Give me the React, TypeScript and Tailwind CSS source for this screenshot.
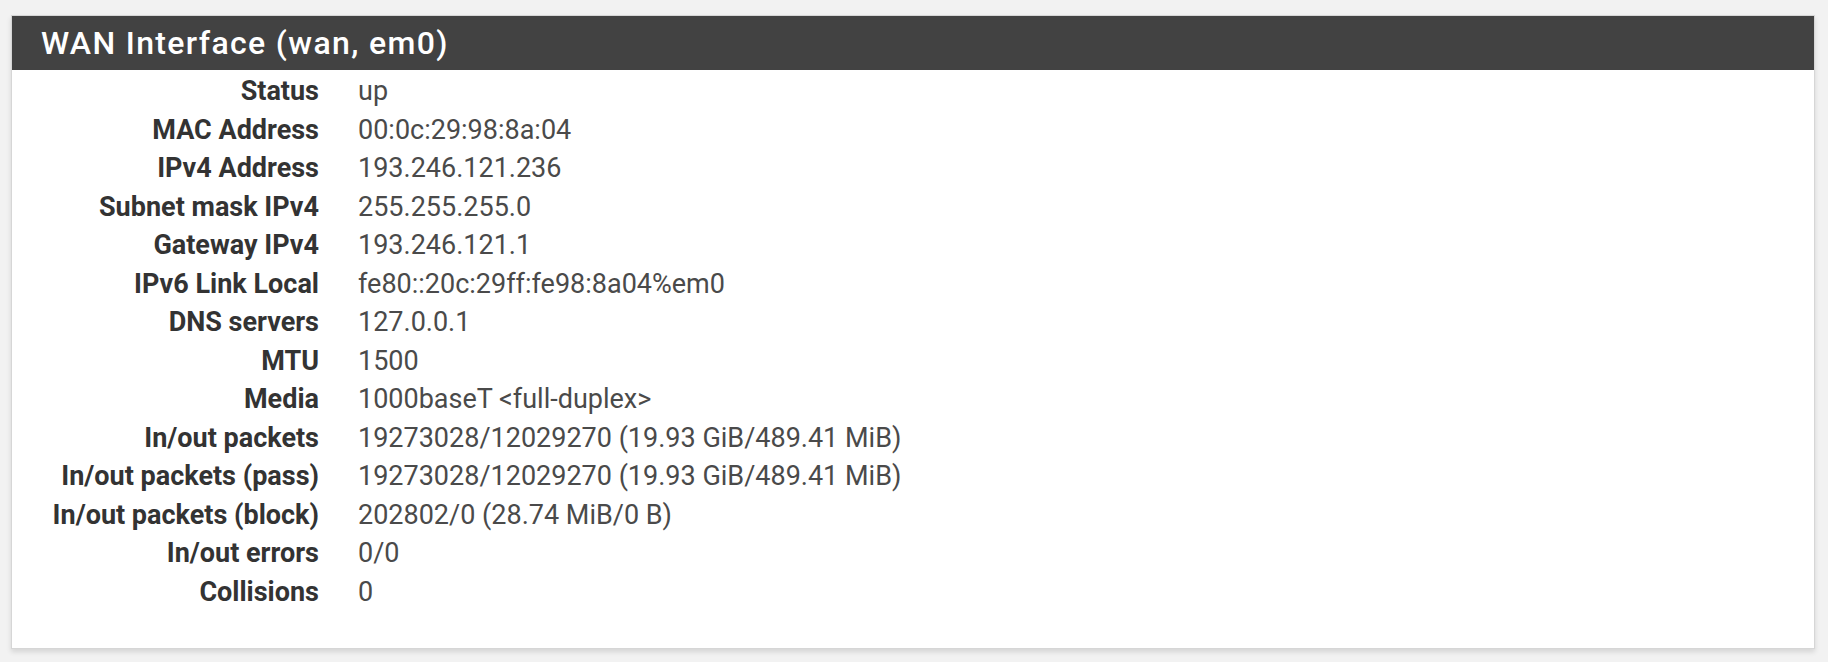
const rows: [string, string][] = [
  ['Status', 'up'],
  ['MAC Address', '00:0c:29:98:8a:04'],
  ['IPv4 Address', '193.246.121.236'],
  ['Subnet mask IPv4', '255.255.255.0'],
  ['Gateway IPv4', '193.246.121.1'],
  ['IPv6 Link Local', 'fe80::20c:29ff:fe98:8a04%em0'],
  ['DNS servers', '127.0.0.1'],
  ['MTU', '1500'],
  ['Media', '1000baseT <full-duplex>'],
  ['In/out packets', '19273028/12029270 (19.93 GiB/489.41 MiB)'],
  ['In/out packets (pass)', '19273028/12029270 (19.93 GiB/489.41 MiB)'],
  ['In/out packets (block)', '202802/0 (28.74 MiB/0 B)'],
  ['In/out errors', '0/0'],
  ['Collisions', '0'],
];

export default function App() {
  return (
    <div className="min-h-[662px] bg-[#f2f2f2] pt-[15px] pb-[15px] pl-[11px] pr-[13px] font-['Roboto',sans-serif]">
      <div className="bg-white border border-[#d6d6d6] shadow-[0_3px_5px_rgba(0,0,0,0.12)]">
        {/* Panel heading */}
        <div className="h-[54px] bg-[#424242] flex items-center pl-[29px]">
          <h2 className="text-[32px] font-medium text-white tracking-[1.35px] leading-none">
            WAN Interface (wan, em0)
          </h2>
        </div>

        {/* Interface details */}
        <div className="pt-[2px] pb-[37px]">
          {rows.map(([label, value]) => (
            <div key={label} className="flex h-[38.5px] items-center text-[27px]">
              <div className="w-[307px] shrink-0 text-right font-bold text-[#333333]">{label}</div>
              <div className="pl-[39px] text-[#4a4a4a]">{value}</div>
            </div>
          ))}
        </div>
      </div>
    </div>
  );
}
